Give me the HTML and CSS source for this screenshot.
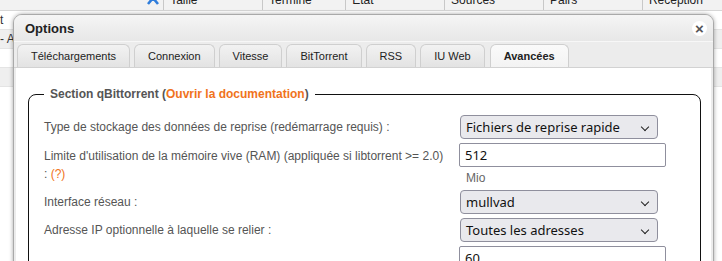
FILE: index.html
```html
<!DOCTYPE html>
<html lang="fr">
<head>
<meta charset="utf-8">
<title>Options</title>
<link rel="stylesheet" href="styles.css">
</head>
<body>
<div class="page">
  <div class="thead">
    <div class="th th-first"><svg class="sort" width="14" height="10" viewBox="0 0 14 10"><path d="M2 9 L7 3 L12 9" fill="none" stroke="#2f7ddb" stroke-width="2.6"/></svg></div>
    <div class="th th-size">Taille</div>
    <div class="th th-done">Terminé</div>
    <div class="th th-state">État</div>
    <div class="th th-src">Sources</div>
    <div class="th th-peers">Pairs</div>
    <div class="th th-recv">Réception</div>
  </div>
  <div class="trow">t</div>
  <div class="trow alt">- A</div>
  <div class="trow">&nbsp;</div>
  <div class="trow alt">&nbsp;</div>
</div>

<div class="modal">
  <div class="titlebar">
    <span class="title">Options</span>
    <span class="close">×</span>
  </div>
  <div class="tabbar">
    <span class="tab">Téléchargements</span>
    <span class="tab">Connexion</span>
    <span class="tab">Vitesse</span>
    <span class="tab">BitTorrent</span>
    <span class="tab">RSS</span>
    <span class="tab">IU Web</span>
    <span class="tab active">Avancées</span>
  </div>
  <div class="content">
    <fieldset class="section">
      <legend>Section qBittorrent (<a class="link" href="#">Ouvrir la documentation</a>)</legend>
      <table class="opts">
        <tr>
          <td class="lbl">Type de stockage des données de reprise (redémarrage requis) :</td>
          <td class="ctl"><div class="select">Fichiers de reprise rapide<span class="chev"></span></div></td>
        </tr>
        <tr>
          <td class="lbl">Limite d'utilisation de la mémoire vive (RAM) (appliquée si libtorrent &gt;= 2.0) : <span class="help">(?)</span></td>
          <td class="ctl"><div class="input">512</div><div class="unit">Mio</div></td>
        </tr>
        <tr>
          <td class="lbl">Interface réseau :</td>
          <td class="ctl"><div class="select">mullvad<span class="chev"></span></div></td>
        </tr>
        <tr>
          <td class="lbl">Adresse IP optionnelle à laquelle se relier :</td>
          <td class="ctl"><div class="select">Toutes les adresses<span class="chev"></span></div></td>
        </tr>
        <tr>
          <td class="lbl">&nbsp;</td>
          <td class="ctl"><div class="input">60</div></td>
        </tr>
      </table>
    </fieldset>
  </div>
</div>
</body>
</html>
```

FILE: styles.css
```css
html, body {
  margin: 0;
  padding: 0;
  width: 722px;
  height: 261px;
  overflow: hidden;
  background: #fff;
  font-family: "Liberation Sans", Arial, sans-serif;
}

.page {
  position: relative;
}

.thead {
  display: flex;
  margin-top: -10px;
  height: 20px;
  background: #f2f2f2;
  border-bottom: 1px solid #d6d6d6;
  font-size: 12px;
  color: #222;
}

.th {
  box-sizing: border-box;
  height: 20px;
  line-height: 20px;
  padding-left: 6px;
  border-right: 1px solid #c8c8c8;
}

.th-first { width: 166px; display: flex; justify-content: flex-end; padding-right: 3px; }
.sort { margin-top: 5px; }
.th-size { width: 100px; }
.th-done { width: 84px; }
.th-state { width: 100px; }
.th-src { width: 100px; }
.th-peers { width: 100px; }
.th-recv { width: 80px; border-right: none; }

.trow {
  height: 18px;
  line-height: 18px;
  font-size: 12px;
  color: #333;
  border-bottom: 1px solid #e4e4e4;
}
.trow.alt { background: #efefef; }

.modal {
  position: absolute;
  left: 13px;
  top: 14px;
  width: 699px;
  height: 280px;
  border: 1px solid #a9a9a9;
  border-radius: 9px 9px 0 0;
  background: #ececec;
  box-shadow: 0 0 4px rgba(0,0,0,0.35);
  overflow: hidden;
}

.titlebar {
  display: flex;
  align-items: center;
  justify-content: space-between;
  height: 26px;
  padding: 0 6px 0 11px;
  background: linear-gradient(#f5f5f5, #e7e7e7);
  border-bottom: 1px solid #f7f7f7;
}

.title {
  font-weight: bold;
  font-size: 13px;
  color: #222;
}

.close {
  display: flex;
  align-items: center;
  justify-content: center;
  width: 15px;
  height: 15px;
  border-radius: 50%;
  background: #fff;
  color: #555;
  font-weight: bold;
  font-size: 15px;
  line-height: 1;
}

.tabbar {
  display: flex;
  gap: 4px;
  align-items: flex-end;
  height: 25px;
  padding: 0 3px;
  background: #ececec;
  border-bottom: 1px solid #d2d2d2;
}

.tab {
  box-sizing: border-box;
  height: 23px;
  line-height: 22px;
  padding: 0 13px;
  font-size: 11px;
  color: #222;
  border: 1px solid #cfcfcf;
  border-bottom: none;
  border-radius: 6px 6px 0 0;
  background: linear-gradient(#f2f2f2, #e3e3e3);
}

.tab.active {
  font-weight: bold;
  background: linear-gradient(#fafafa, #f3f3f3);
  margin-left: 1px;
}

.content {
  background: #fff;
  height: 240px;
  padding: 19px 10px 0 12px;
  margin: 0 2px;
}

.section {
  margin: 0;
  padding: 12px 12px 0 15px;
  border: 1px solid #111;
  border-radius: 8px;
}

.section legend {
  padding: 0 6px;
  margin-left: 0;
  font-weight: bold;
  font-size: 12px;
  color: #555;
}

.link {
  color: #f0731c;
  text-decoration: none;
}

.opts {
  border-collapse: collapse;
  width: 100%;
}

.opts td {
  padding: 2px 0;
  vertical-align: middle;
}

.lbl {
  font-size: 12px;
  color: #555;
  line-height: 18px;
  padding-right: 15px !important;
  width: 400px;
}

.help { color: #f0731c; }

.ctl {
  font-family: "Noto Sans", "Open Sans", sans-serif;
  line-height: 0;
}

.select {
  box-sizing: border-box;
  position: relative;
  width: 198px;
  height: 24px;
  margin-left: 1px;
  padding-left: 5px;
  line-height: 22px;
  font-size: 13px;
  color: #111;
  background: #e9e9ed;
  border: 1px solid #8f8f9d;
  border-radius: 4px;
}

.chev {
  position: absolute;
  right: 9px;
  top: 8px;
  width: 5px;
  height: 5px;
  border-right: 1.5px solid #222;
  border-bottom: 1.5px solid #222;
  transform: rotate(45deg);
}

.input {
  box-sizing: border-box;
  width: 207px;
  height: 24px;
  padding-left: 5px;
  line-height: 22px;
  font-size: 13px;
  color: #111;
  background: #fff;
  border: 1px solid #8f8f9d;
  border-radius: 2px;
}

.unit {
  font-family: "Liberation Sans", Arial, sans-serif;
  font-size: 12px;
  color: #666;
  padding: 3px 0 0 7px;
  line-height: 16px;
}
```
